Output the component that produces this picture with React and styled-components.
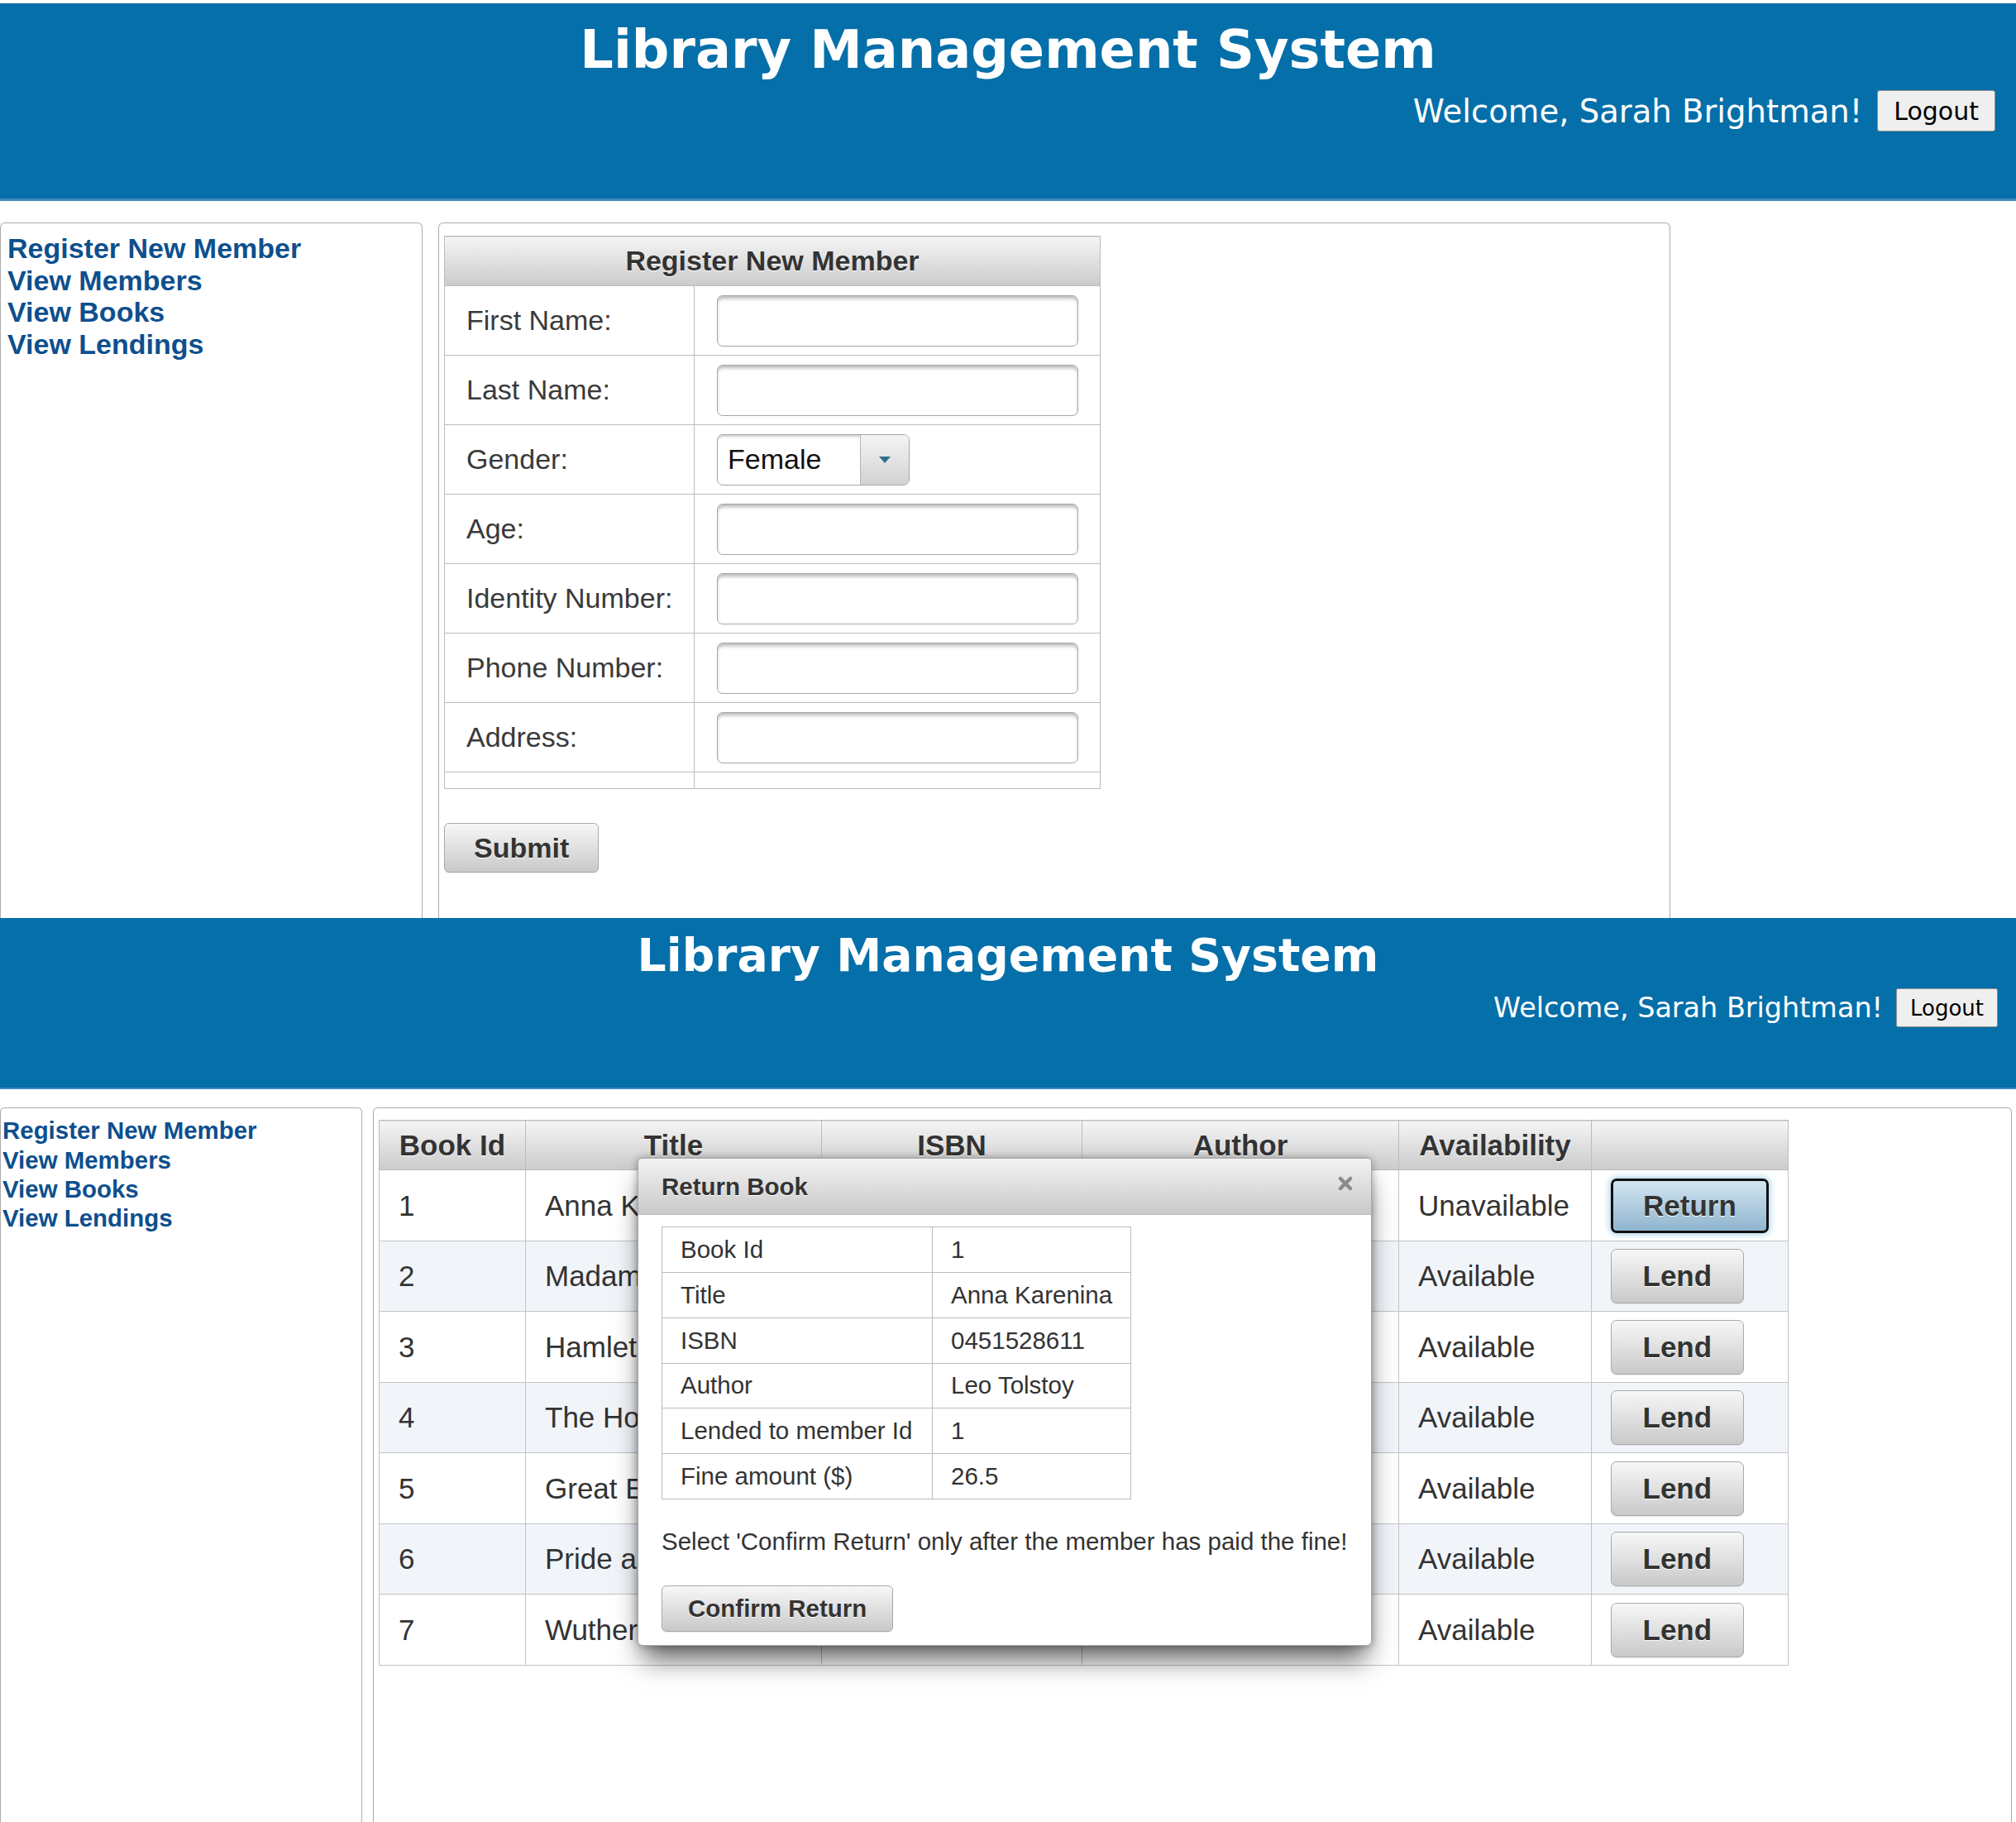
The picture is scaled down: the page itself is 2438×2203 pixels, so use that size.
import React from "react";
import styled, { createGlobalStyle, ThemeProvider } from "styled-components";

const u = (v) => ({ theme }) => `${(v * theme.s).toFixed(2)}px`;

const GlobalStyle = createGlobalStyle`
  html, body { margin: 0; padding: 0; background: #ffffff; }
  body { font-family: "Liberation Sans", Arial, sans-serif; color: #333; }
  * { box-sizing: border-box; }
`;

const Page = styled.div`
  padding-top: 4px;
  width: 2438px;
`;

const Screen = styled.section`
  height: ${(p) => p.$h}px;
  overflow: hidden;
  display: flex;
  flex-direction: column;
`;

const Header = styled.header`
  flex: none;
  height: ${u(239)};
  background: #056faa;
  border-bottom: ${u(3)} solid #3f8ac0;
  padding-top: ${({ theme }) => theme.padTop}px;
`;

const Title = styled.h1`
  margin: 0;
  text-align: center;
  color: #fff;
  font-family: "DejaVu Sans", Verdana, sans-serif;
  font-weight: bold;
  font-size: ${u(63.8)};
  line-height: ${u(74)};
`;

const UserBar = styled.div`
  display: flex;
  justify-content: flex-end;
  align-items: center;
  gap: ${u(18)};
  padding-right: ${u(25)};
  margin-top: ${({ theme }) => theme.barTop}px;
`;

const Welcome = styled.span`
  color: #fff;
  font-family: "DejaVu Sans", Verdana, sans-serif;
  font-size: ${u(38.6)};
`;

const LogoutButton = styled.button`
  height: ${({ theme }) => theme.logoutH}px;
  padding: 0 ${u(19)};
  font-family: "DejaVu Sans", Verdana, sans-serif;
  font-size: ${u(30)};
  color: #000;
  background: #efefef;
  border: 1px solid #8f8f8f;
  border-radius: ${u(3)};
`;

const Body = styled.div`
  flex: 1;
  display: flex;
  gap: ${({ theme }) => theme.gap}px;
  margin-top: ${u(26)};
  min-height: 0;
`;

const Sidebar = styled.nav`
  flex: none;
  width: ${(p) => p.$w}px;
  border: 1px solid #ababab;
  border-bottom: none;
  border-radius: ${u(6)} ${u(6)} 0 0;
  padding: ${({ theme }) => theme.navPad};
`;

const NavLink = styled.a`
  display: block;
  color: #0e4f8d;
  font-family: "Liberation Sans", Arial, sans-serif;
  font-weight: bold;
  font-size: ${u(34)};
  line-height: ${({ theme }) => theme.navLine}px;
  text-decoration: none;
`;

const Panel = styled.main`
  position: relative;
  flex: ${(p) => (p.$w ? "none" : "1")};
  width: ${(p) => (p.$w ? `${p.$w}px` : "auto")};
  margin-right: ${(p) => p.$mr || 0}px;
  border: 1px solid #ababab;
  border-bottom: none;
  border-radius: ${u(6)} ${u(6)} 0 0;
  padding: ${(p) => p.$pt}px ${(p) => p.$pl}px 0 ${(p) => p.$pl}px;
`;

/* ---------- Register form (top screen) ---------- */

const FormTable = styled.table`
  width: 794px;
  border-collapse: collapse;
  border: 1px solid #bcbcbc;
  font-size: 34px;
  color: #3a3a3a;
`;

const GradientHead = styled.th`
  height: ${(p) => p.$h}px;
  padding: 0;
  background: linear-gradient(#f5f5f5, #cbcbcb);
  border: 1px solid #bcbcbc;
  color: #333;
  font-weight: bold;
  text-align: center;
  text-shadow: 0 1px 0 #fff;
  white-space: nowrap;
`;

const FormRow = styled.tr`
  height: ${(p) => p.$h}px;
`;

const LabelCell = styled.td`
  width: 302px;
  padding: 0 0 0 26px;
  border: 1px solid #bcbcbc;
`;

const FieldCell = styled.td`
  padding: 0 0 0 27px;
  border: 1px solid #bcbcbc;
`;

const TextInput = styled.input`
  display: block;
  width: 437px;
  height: 62px;
  border: 1px solid #a6a6a6;
  border-radius: 7px;
  background: #fff;
  box-shadow: inset 0 4px 4px -1px rgba(0, 0, 0, 0.28);
  font-size: 34px;
  padding: 0 12px;
`;

const SelectBox = styled.div`
  display: flex;
  width: 233px;
  height: 62px;
  border: 1px solid #a6a6a6;
  border-radius: 7px;
  overflow: hidden;
  background: #fff;
  box-shadow: inset 0 3px 3px -1px rgba(0, 0, 0, 0.2);
`;

const SelectValue = styled.span`
  flex: 1;
  display: flex;
  align-items: center;
  padding-left: 12px;
  font-size: 34px;
  color: #111;
`;

const SelectArrow = styled.span`
  flex: none;
  width: 59px;
  display: flex;
  align-items: center;
  justify-content: center;
  border-left: 1px solid #b5b5b5;
  background: linear-gradient(#f4f4f4, #d2d2d2);
`;

const GrayButton = styled.button`
  height: ${(p) => p.$h}px;
  padding: 0 ${(p) => p.$px}px;
  font-family: "Liberation Sans", Arial, sans-serif;
  font-weight: bold;
  font-size: ${(p) => p.$fs}px;
  color: #333;
  text-shadow: 0 1px 0 #fff;
  background: linear-gradient(#f7f7f7, #c9c9c9);
  border: 1px solid #a9a9a9;
  border-radius: 6px;
  box-shadow: 0 1px 1px rgba(0, 0, 0, 0.08);
`;

const SubmitWrap = styled.div`
  margin-top: 41px;
`;

/* ---------- Books table (bottom screen) ---------- */

const BooksTable = styled.table`
  width: 1704px;
  table-layout: fixed;
  border-collapse: collapse;
  border: 1px solid #bdbdbd;
  font-size: 35px;
  color: #333;
`;

const Col = styled.col`
  width: ${(p) => p.$w}px;
`;

const BookRow = styled.tr`
  height: 85.5px;
  background: ${(p) => (p.$alt ? "#f1f5fa" : "#fff")};
`;

const BookCell = styled.td`
  padding: 0 0 0 23px;
  border: 1px solid #c3c3c3;
  white-space: nowrap;
  overflow: hidden;
`;

const ActionButton = styled.button`
  height: 66px;
  padding: 0 ${(p) => (p.$active ? 36 : 37.5)}px;
  font-family: "Liberation Sans", Arial, sans-serif;
  font-weight: bold;
  font-size: 35px;
  color: #333;
  text-shadow: 0 1px 0 #fff;
  border-radius: 7px;
  background: ${(p) =>
    p.$active ? "linear-gradient(#d3e5f0, #8fb5cf)" : "linear-gradient(#f7f7f7, #c9c9c9)"};
  border: ${(p) => (p.$active ? "3px solid #111" : "1px solid #a9a9a9")};
  box-shadow: ${(p) => (p.$active ? "0 0 7px 2px rgba(140,195,230,0.7)" : "0 1px 1px rgba(0,0,0,0.08)")};
`;

/* ---------- Modal ---------- */

const Modal = styled.div`
  position: absolute;
  left: 319px;
  top: 60px;
  width: 888px;
  background: #fff;
  border: 1px solid #a8a8a8;
  border-radius: 6px;
  box-shadow: 0 22px 30px -6px rgba(0, 0, 0, 0.62), 0 0 10px rgba(0, 0, 0, 0.3);
  overflow: hidden;
`;

const ModalBar = styled.div`
  height: 68px;
  display: flex;
  align-items: center;
  justify-content: space-between;
  padding: 0 22px 0 28px;
  background: linear-gradient(#f3f3f3, #c9c9c9);
  border-bottom: 1px solid #bdbdbd;
`;

const ModalTitle = styled.span`
  font-weight: bold;
  font-size: 29.5px;
  color: #333;
  text-shadow: 0 1px 0 #fff;
`;

const CloseIcon = styled.svg`
  align-self: flex-start;
  margin-top: 21px;
  flex: none;
`;

const ModalBody = styled.div`
  padding: 14px 28px 16px 28px;
  font-size: 29.5px;
  color: #333;
`;

const InfoTable = styled.table`
  width: 568px;
  border-collapse: collapse;
  border: 1px solid #bcbcbc;
`;

const InfoRow = styled.tr`
  height: 54.7px;
`;

const InfoCell = styled.td`
  width: ${(p) => (p.$w ? `${p.$w}px` : "auto")};
  padding: 0 0 0 22px;
  border: 1px solid #bcbcbc;
  white-space: nowrap;
`;

const Notice = styled.p`
  margin: 34px 0 36px 0;
  line-height: 34px;
`;

const fields = [
  "First Name:",
  "Last Name:",
  "Gender:",
  "Age:",
  "Identity Number:",
  "Phone Number:",
  "Address:",
];

const books = [
  { id: 1, title: "Anna Karenina", isbn: "0451528611", author: "Leo Tolstoy", avail: "Unavailable" },
  { id: 2, title: "Madame Bovary", isbn: "", author: "", avail: "Available" },
  { id: 3, title: "Hamlet", isbn: "", author: "Shakespeare", avail: "Available" },
  { id: 4, title: "The Hobbit", isbn: "", author: "", avail: "Available" },
  { id: 5, title: "Great Expectations", isbn: "", author: "", avail: "Available" },
  { id: 6, title: "Pride and Prejudice", isbn: "", author: "", avail: "Available" },
  { id: 7, title: "Wuthering Heights", isbn: "", author: "", avail: "Available" },
];

const info = [
  ["Book Id", "1"],
  ["Title", "Anna Karenina"],
  ["ISBN", "0451528611"],
  ["Author", "Leo Tolstoy"],
  ["Lended to member Id", "1"],
  ["Fine amount ($)", "26.5"],
];

const topTheme = { s: 1, padTop: 19, barTop: 12, logoutH: 50, gap: 19, navPad: "11px 8px", navLine: 38.6 };
const bottomTheme = { s: 0.866, padTop: 13, barTop: 8, logoutH: 47, gap: 13, navPad: "9px 2px", navLine: 35.2 };

function TopBar() {
  return (
    <Header>
      <Title>Library Management System</Title>
      <UserBar>
        <Welcome>Welcome, Sarah Brightman!</Welcome>
        <LogoutButton>Logout</LogoutButton>
      </UserBar>
    </Header>
  );
}

function Nav({ width }) {
  return (
    <Sidebar $w={width}>
      <NavLink href="#">Register New Member</NavLink>
      <NavLink href="#">View Members</NavLink>
      <NavLink href="#">View Books</NavLink>
      <NavLink href="#">View Lendings</NavLink>
    </Sidebar>
  );
}

export default function App() {
  return (
    <Page>
      <GlobalStyle />
      <ThemeProvider theme={topTheme}>
        <Screen $h={1106}>
          <TopBar />
          <Body>
            <Nav width={511} />
            <Panel $w={1490} $pt={15} $pl={6}>
              <FormTable>
                <thead>
                  <tr>
                    <GradientHead colSpan={2} $h={60}>Register New Member</GradientHead>
                  </tr>
                </thead>
                <tbody>
                  {fields.map((f) => (
                    <FormRow key={f} $h={84}>
                      <LabelCell>{f}</LabelCell>
                      <FieldCell>
                        {f === "Gender:" ? (
                          <SelectBox>
                            <SelectValue>Female</SelectValue>
                            <SelectArrow>
                              <svg width="16" height="10" viewBox="0 0 16 10">
                                <path d="M1 1 L15 1 L8 9 Z" fill="#2f6e8f" />
                              </svg>
                            </SelectArrow>
                          </SelectBox>
                        ) : (
                          <TextInput type="text" />
                        )}
                      </FieldCell>
                    </FormRow>
                  ))}
                  <FormRow $h={20}>
                    <LabelCell />
                    <FieldCell />
                  </FormRow>
                </tbody>
              </FormTable>
              <SubmitWrap>
                <GrayButton $h={60} $px={35} $fs={34}>Submit</GrayButton>
              </SubmitWrap>
            </Panel>
          </Body>
        </Screen>
      </ThemeProvider>

      <ThemeProvider theme={bottomTheme}>
        <Screen $h={1093}>
          <TopBar />
          <Body>
            <Nav width={438} />
            <Panel $pt={14} $pl={6} $mr={5}>
              <BooksTable>
                <colgroup>
                  <Col $w={177} />
                  <Col $w={358} />
                  <Col $w={315} />
                  <Col $w={383} />
                  <Col $w={233} />
                  <Col $w={238} />
                </colgroup>
                <thead>
                  <tr>
                    <GradientHead $h={60}>Book Id</GradientHead>
                    <GradientHead $h={60}>Title</GradientHead>
                    <GradientHead $h={60}>ISBN</GradientHead>
                    <GradientHead $h={60}>Author</GradientHead>
                    <GradientHead $h={60}>Availability</GradientHead>
                    <GradientHead $h={60} />
                  </tr>
                </thead>
                <tbody>
                  {books.map((b, i) => (
                    <BookRow key={b.id} $alt={i % 2 === 1}>
                      <BookCell>{b.id}</BookCell>
                      <BookCell>{b.title}</BookCell>
                      <BookCell>{b.isbn}</BookCell>
                      <BookCell>{b.author}</BookCell>
                      <BookCell>{b.avail}</BookCell>
                      <BookCell>
                        {b.avail === "Unavailable" ? (
                          <ActionButton $active>Return</ActionButton>
                        ) : (
                          <ActionButton>Lend</ActionButton>
                        )}
                      </BookCell>
                    </BookRow>
                  ))}
                </tbody>
              </BooksTable>

              <Modal>
                <ModalBar>
                  <ModalTitle>Return Book</ModalTitle>
                  <CloseIcon width="18" height="18" viewBox="0 0 18 18" aria-label="close">
                    <path d="M3 3 L15 15 M15 3 L3 15" stroke="#8a8a8a" strokeWidth="4.5" strokeLinecap="round" />
                  </CloseIcon>
                </ModalBar>
                <ModalBody>
                  <InfoTable>
                    <tbody>
                      {info.map(([k, v]) => (
                        <InfoRow key={k}>
                          <InfoCell $w={327}>{k}</InfoCell>
                          <InfoCell>{v}</InfoCell>
                        </InfoRow>
                      ))}
                    </tbody>
                  </InfoTable>
                  <Notice>Select 'Confirm Return' only after the member has paid the fine!</Notice>
                  <GrayButton $h={56} $px={31} $fs={29.5}>Confirm Return</GrayButton>
                </ModalBody>
              </Modal>
            </Panel>
          </Body>
        </Screen>
      </ThemeProvider>
    </Page>
  );
}
